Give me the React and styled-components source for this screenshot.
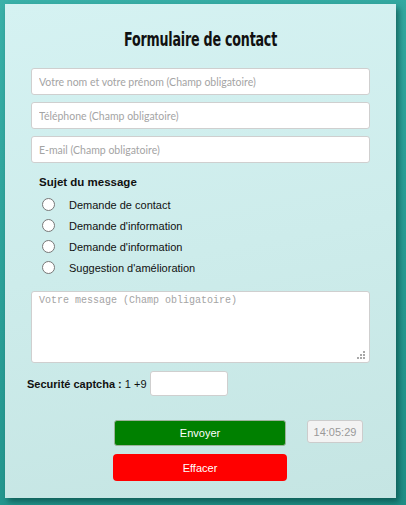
import React from 'react';
import styled, { createGlobalStyle } from 'styled-components';

const Global = createGlobalStyle`
  html, body {
    margin: 0;
    padding: 0;
  }
  body {
    background: linear-gradient(160deg, #3ab1a9 0%, #2a9f97 50%, #1f8f87 100%);
    min-height: 505px;
    font-family: "Liberation Sans", Arial, sans-serif;
  }
`;

const Page = styled.div`
  padding: 4px 10px 7px 5px;
`;

const Card = styled.form`
  width: 391px;
  height: 494px;
  box-sizing: border-box;
  padding: 23px 26px 0;
  background: linear-gradient(170deg, #d5f2f2 0%, #cdeceb 50%, #c5e5e3 100%);
  box-shadow: 3px 4px 6px rgba(0, 55, 50, 0.55);
  display: flex;
  flex-direction: column;
`;

const Title = styled.h1`
  margin: 0 0 17px;
  text-align: center;
  font-size: 20px;
  line-height: 24px;
  span {
    display: inline-block;
    font-family: "DejaVu Sans", sans-serif;
    font-stretch: condensed;
    font-weight: bold;
    letter-spacing: -0.3px;
    color: #111;
    transform: scaleX(0.705);
  }
`;

const Field = styled.input`
  display: block;
  box-sizing: border-box;
  width: 100%;
  height: 27px;
  margin: 0 0 7px;
  padding: 0 7px;
  border: 1px solid #cfcfcf;
  border-radius: 3px;
  background: #fff;
  font-family: "Lato", sans-serif;
  font-size: 10.5px;
  outline: none;
  &::placeholder {
    color: #a4a4a4;
  }
`;

const Legend = styled.div`
  margin: 5px 0 4px 8px;
  font-weight: bold;
  font-size: 11.5px;
  line-height: 15px;
  color: #111;
`;

const Choices = styled.div`
  display: flex;
  flex-direction: column;
  margin-left: 11px;
`;

const Choice = styled.label`
  display: flex;
  align-items: center;
  height: 21px;
  font-size: 11px;
  color: #111;
`;

const Dot = styled.span`
  width: 13px;
  height: 13px;
  box-sizing: border-box;
  border: 1px solid #777;
  border-radius: 50%;
  background: #fff;
  margin-right: 14px;
`;

const MessageBox = styled.div`
  position: relative;
  margin-top: 13px;
`;

const Message = styled.textarea`
  display: block;
  box-sizing: border-box;
  width: 100%;
  height: 72px;
  padding: 3px 7px;
  border: 1px solid #cfcfcf;
  border-radius: 3px;
  background: #fff;
  resize: none;
  font-family: "Liberation Mono", monospace;
  font-size: 10px;
  outline: none;
  &::placeholder {
    color: #a4a4a4;
  }
`;

const Grip = styled.svg`
  position: absolute;
  right: 5px;
  bottom: 4px;
`;

const Captcha = styled.div`
  display: flex;
  align-items: center;
  margin: 8px 0 0 -4px;
  font-size: 11px;
  color: #111;
  b {
    font-weight: bold;
  }
`;

const CaptchaInput = styled.input`
  box-sizing: border-box;
  width: 78px;
  height: 25px;
  margin-left: 3px;
  border: 1px solid #cfcfcf;
  border-radius: 3px;
  background: #fff;
  outline: none;
`;

const Actions = styled.div`
  display: flex;
  flex-direction: column;
  align-items: flex-start;
  gap: 8px;
  margin: 24px 0 0 83px;
`;

const Row = styled.div`
  display: flex;
  align-items: flex-start;
  gap: 21px;
`;

const Button = styled.button`
  box-sizing: border-box;
  width: ${(p) => (p.$wide ? '174px' : '172px')};
  height: ${(p) => (p.$wide ? '27px' : '26px')};
  margin-left: ${(p) => (p.$wide ? '-1px' : '0')};
  border: ${(p) => (p.$wide ? 'none' : '1px solid #9bb39b')};
  border-radius: ${(p) => (p.$wide ? '4px' : '3px')};
  background: ${(p) => p.$color};
  color: #fff;
  font-family: "Liberation Sans", Arial, sans-serif;
  font-size: 11px;
  padding: 0;
`;

const Clock = styled.div`
  box-sizing: border-box;
  width: 56px;
  height: 23px;
  border: 1px solid #cccccc;
  border-radius: 3px;
  background: #f3f3f3;
  color: #999;
  font-size: 11px;
  display: flex;
  align-items: center;
  justify-content: center;
`;

const subjects = [
  'Demande de contact',
  "Demande d'information",
  "Demande d'information",
  "Suggestion d'amélioration",
];

export default function App() {
  return (
    <Page>
      <Global />
      <Card onSubmit={(e) => e.preventDefault()}>
        <Title>
          <span>Formulaire de contact</span>
        </Title>
        <Field placeholder="Votre nom et votre prénom (Champ obligatoire)" />
        <Field placeholder="Téléphone (Champ obligatoire)" />
        <Field placeholder="E-mail (Champ obligatoire)" />
        <Legend>Sujet du message</Legend>
        <Choices>
          {subjects.map((s, i) => (
            <Choice key={i}>
              <Dot />
              {s}
            </Choice>
          ))}
        </Choices>
        <MessageBox>
          <Message placeholder="Votre message (Champ obligatoire)" />
          <Grip width="8" height="8" viewBox="0 0 8 8">
            <rect x="6" y="0" width="2" height="2" fill="#a8a8a8" />
            <rect x="3" y="3" width="2" height="2" fill="#a8a8a8" />
            <rect x="6" y="3" width="2" height="2" fill="#a8a8a8" />
            <rect x="0" y="6" width="2" height="2" fill="#a8a8a8" />
            <rect x="3" y="6" width="2" height="2" fill="#a8a8a8" />
            <rect x="6" y="6" width="2" height="2" fill="#a8a8a8" />
          </Grip>
        </MessageBox>
        <Captcha>
          <b>Securité captcha :</b>&nbsp;1 +9
          <CaptchaInput />
        </Captcha>
        <Actions>
          <Row>
            <Button $color="#008000">Envoyer</Button>
            <Clock>14:05:29</Clock>
          </Row>
          <Button $color="#ff0000" $wide>Effacer</Button>
        </Actions>
      </Card>
    </Page>
  );
}
